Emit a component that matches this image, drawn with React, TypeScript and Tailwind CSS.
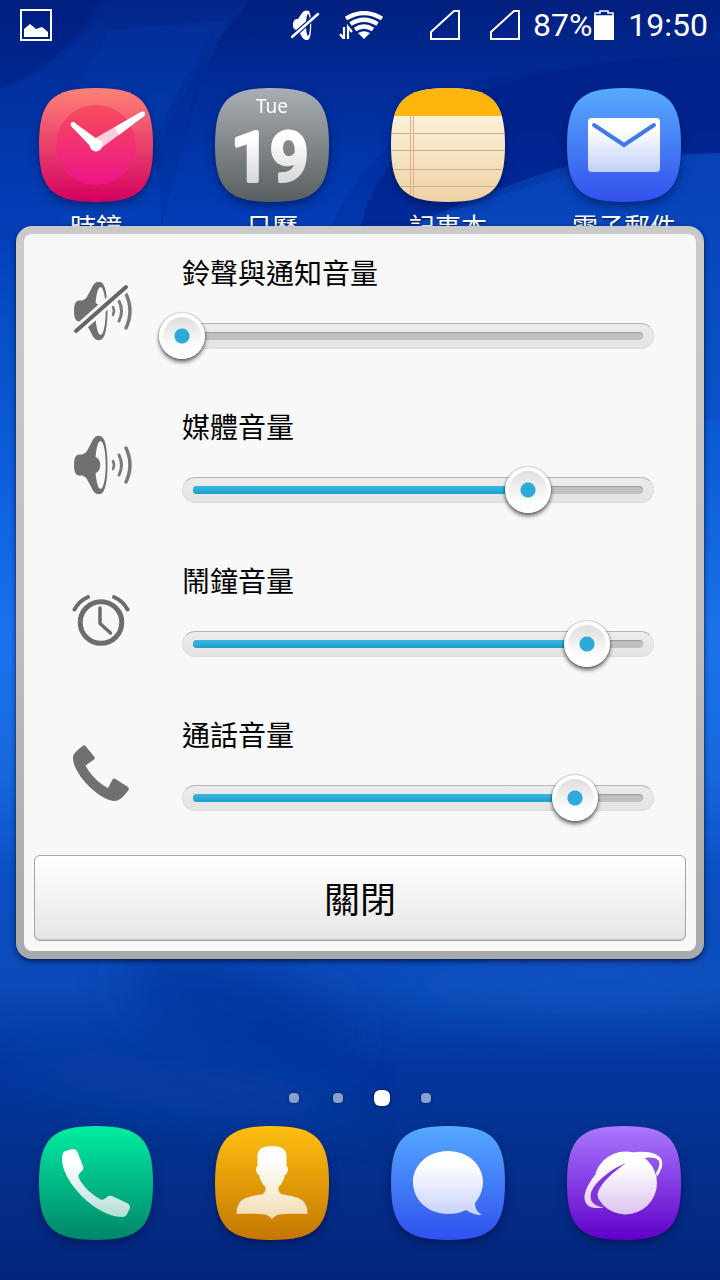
import { useState } from 'react'
import type { ReactNode } from 'react'

const SQUIRCLE = 'M57 0C101 0 114 13 114 57S101 114 57 114 0 101 0 57 13 0 57 0Z'

function Wallpaper() {
  return (
    <svg className="absolute inset-0 h-full w-full" viewBox="0 0 720 1280" preserveAspectRatio="none" aria-hidden="true">
      <defs>
        <linearGradient id="sky" x1="0" y1="0" x2="0" y2="1">
          <stop offset="0" stopColor="#011f7e" />
          <stop offset="0.06" stopColor="#012a96" />
          <stop offset="0.16" stopColor="#023bb3" />
          <stop offset="0.26" stopColor="#0650c8" />
          <stop offset="0.36" stopColor="#0c5cd8" />
          <stop offset="0.5" stopColor="#1b72ec" />
          <stop offset="0.6" stopColor="#1768e0" />
          <stop offset="0.68" stopColor="#0b50c4" />
          <stop offset="0.77" stopColor="#0b4ab8" />
          <stop offset="0.83" stopColor="#04369f" />
          <stop offset="0.89" stopColor="#033291" />
          <stop offset="1" stopColor="#04257c" />
        </linearGradient>
        <filter id="soft" x="-30%" y="-60%" width="160%" height="220%">
          <feGaussianBlur stdDeviation="24" />
        </filter>
      </defs>
      <rect width="720" height="1280" fill="url(#sky)" />
      <path d="M100 0H250Q200 60 175 110L120 230H0V90Q60 70 100 0Z" fill="#0848bd" opacity="0.2" />
      <path d="M230 20Q185 90 165 230H60Q50 120 110 30Z" fill="#0848bd" opacity="0.16" />
      <path d="M0 0H110Q70 60 0 88Z" fill="#001d84" opacity="0.25" />
      <path d="M215 30Q180 80 150 150Q165 200 160 230H330Q360 150 480 80Q590 56 720 56V154Q600 154 400 230H160Z" fill="#001c84" opacity="0.2" />
      <path d="M360 230Q375 150 480 90Q590 56 720 56V154Q600 154 400 230Z" fill="#001c84" opacity="0.5" />
      <path d="M400 230Q490 190 560 168Q620 153 720 153V420H400Z" fill="#0c4cc0" opacity="0.55" />
      <ellipse cx="240" cy="1010" rx="120" ry="44" transform="rotate(18 240 1010)" fill="#02309a" opacity="0.7" filter="url(#soft)" />
      <ellipse cx="600" cy="985" rx="200" ry="30" fill="#1157c4" opacity="0.6" filter="url(#soft)" />
      <ellipse cx="180" cy="1085" rx="180" ry="24" transform="rotate(8 180 1085)" fill="#0c47ab" opacity="0.6" filter="url(#soft)" />
    </svg>
  )
}

function StatusBar() {
  return (
    <header className="flex h-[50px] items-center pr-3 pl-5 text-[32px] leading-none text-white">
      <svg className="h-8 w-8" viewBox="0 0 32 32" aria-hidden="true">
        <rect x="1" y="1" width="30" height="30" fill="none" stroke="#fff" strokeWidth="2" />
        <path d="M4 28V20L10 15L16 20L22 18L28 23V28Z" fill="#fff" />
      </svg>
      <div className="ml-auto flex items-center">
        <svg className="h-[30px] w-[30px]" viewBox="0 0 30 30" aria-hidden="true">
          <path d="M2 15C2 10 4 9 7 9L11 3C13 0 16 0 18 1C21 6 21 25 18 29C16 31 13 30 11 27L7 20C4 20 2 19 2 15Z" fill="#fff" />
          <ellipse cx="17" cy="15" rx="2" ry="11" fill="#01228a" />
          <path d="M1 27L27 4" stroke="#01228a" strokeWidth="5" />
          <path d="M1 27L27 4" stroke="#fff" strokeWidth="2.500" strokeLinecap="round" />
        </svg>
        <svg className="ml-[18px] h-7 w-[46px]" viewBox="0 0 46 28" aria-hidden="true">
          <g fill="none" stroke="#fff" strokeWidth="4.200">
            <path d="M7 7.500Q25 -3.500 43 7.500" />
            <path d="M11.500 13Q25 4.500 38.500 13" />
            <path d="M16 18.500Q25 12.500 34 18.500" />
          </g>
          <path d="M19 22Q25 18.500 31 22L25 28Z" fill="#fff" />
          <path d="M5 16V28L1 23M9 28V16L13 21" fill="none" stroke="#fff" strokeWidth="2.200" />
        </svg>
        <svg className="ml-[45px] h-[30px] w-[30px]" viewBox="0 0 30 30" aria-hidden="true">
          <path d="M1 29V22L24 1H29V29Z" fill="none" stroke="#fff" strokeWidth="2" />
        </svg>
        <svg className="ml-[30px] h-[30px] w-[30px]" viewBox="0 0 30 30" aria-hidden="true">
          <path d="M1 29V22L24 1H29V29Z" fill="none" stroke="#fff" strokeWidth="2" />
        </svg>
        <span className="ml-[13px]">87%</span>
        <svg className="ml-[2px] h-[30px] w-5" viewBox="0 0 20 30" aria-hidden="true">
          <path d="M0 5H20V30H0Z" fill="#fff" />
          <path d="M1 6V3H6V1H14V3H19V6Z" fill="#01228a" stroke="#fff" strokeWidth="1.500" />
        </svg>
        <span className="ml-[14px]">19:50</span>
      </div>
    </header>
  )
}

function AppIcon({ id, from, to, children }: { id: string; from: string; to: string; children: ReactNode }) {
  return (
    <svg className="h-[114px] w-[114px] overflow-visible drop-shadow-[0_4px_4px_rgba(0,10,60,0.5)]" viewBox="0 0 114 114" aria-hidden="true">
      <defs>
        <linearGradient id={`${id}-bg`} x1="0" y1="0" x2="0" y2="1">
          <stop offset="0" stopColor={from} />
          <stop offset="1" stopColor={to} />
        </linearGradient>
        <clipPath id={`${id}-clip`}>
          <path d={SQUIRCLE} />
        </clipPath>
      </defs>
      <path d={SQUIRCLE} fill={`url(#${id}-bg)`} />
      <g clipPath={`url(#${id}-clip)`}>{children}</g>
    </svg>
  )
}

// Vertical white-to-tint fade used on the icon glyphs
function Fade({ id, y1, y2, to }: { id: string; y1: number; y2: number; to: string }) {
  return (
    <linearGradient id={id} gradientUnits="userSpaceOnUse" x1="0" y1={y1} x2="0" y2={y2}>
      <stop offset="0.2" stopColor="#fff" />
      <stop offset="1" stopColor={to} />
    </linearGradient>
  )
}

const apps = [
  {
    label: '時鐘',
    icon: (
      <AppIcon id="clock" from="#ff8278" to="#d4005f">
        <defs>
          <linearGradient id="dial" x1="0" y1="0" x2="0" y2="1">
            <stop offset="0" stopColor="#f84c5c" />
            <stop offset="0.5" stopColor="#f23072" />
            <stop offset="1" stopColor="#ee1488" />
          </linearGradient>
        </defs>
        <circle cx="57" cy="57" r="40" fill="url(#dial)" />
        <path d="M54 61L32 38Q31 35 33 34Q35 33 36 35L62 54Z" fill="#fff" />
        <path d="M61 61L105 28Q107 25 105 24Q104 23 102 24L53 52Z" fill="#ffcfe0" />
        <path d="M80 47L105 28Q107 25 105 24Q104 23 102 24L76 39Z" fill="#fff" />
        <circle cx="57" cy="57" r="6.500" fill="#fff" />
      </AppIcon>
    ),
  },
  {
    label: '日曆',
    icon: (
      <AppIcon id="calendar" from="#aaafb4" to="#595e60">
        <defs>
          <Fade id="date" y1={40} y2={98} to="#d2d4d5" />
        </defs>
        <text x="57" y="25" textAnchor="middle" fontFamily="'Noto Sans', sans-serif" fontSize="19" fill="#fff">Tue</text>
        <text x="55" y="93" textAnchor="middle" fontFamily="Roboto, sans-serif" fontWeight="500" fontSize="68" fill="url(#date)" stroke="url(#date)" strokeWidth="4" strokeLinejoin="round">19</text>
      </AppIcon>
    ),
  },
  {
    label: '記事本',
    icon: (
      <AppIcon id="notes" from="#fffbe8" to="#eed2a4">
        <rect width="114" height="28" fill="#ffb60c" />
        <path d="M0 45.500H114M0 62.500H114M0 81.500H114M0 98.500H114" stroke="#c3b192" />
        <path d="M19.500 28V114M22.500 28V114" stroke="#e8a98c" />
      </AppIcon>
    ),
  },
  {
    label: '電子郵件',
    icon: (
      <AppIcon id="mail" from="#57abff" to="#3350ec">
        <defs>
          <Fade id="envelope" y1={30} y2={84} to="#c3cff8" />
        </defs>
        <rect x="21" y="30" width="72" height="54" rx="4" fill="url(#envelope)" />
        <path d="M27 37L57 57L87 37" fill="none" stroke="#4379e8" strokeWidth="4" strokeLinecap="round" />
      </AppIcon>
    ),
  },
]

const dock = [
  {
    label: '電話',
    icon: (
      <AppIcon id="phone" from="#00eda2" to="#00856a">
        <defs>
          <Fade id="handset" y1={23} y2={91} to="#b4ded5" />
        </defs>
        <path d="M26 25L34 23Q37 22.500 38.500 26L44 40Q45 43 42.500 45.500Q39 48 39.500 51C43 60 54 70 63 74Q66 73 68 71Q71 69 74 70.500L88 77Q91.500 79 91 82L88 88Q87 91 83 91C57 91 22 55 23 32Q23 27 26 25Z" fill="url(#handset)" />
      </AppIcon>
    ),
  },
  {
    label: '聯絡人',
    icon: (
      <AppIcon id="contacts" from="#ffc010" to="#c47600">
        <defs>
          <Fade id="person" y1={20} y2={93} to="#f2ddb4" />
        </defs>
        <path d="M57 20C48 20 43 23 42.500 29V40C40 41 41 48 44 49C45 54 47 58 50.500 61C51 64 50 66 48 68C38 70 29 71 25 76C22 80 21.500 84 21.500 88C32 87.500 44 87.500 50 88.500C53 89 55 91 57 93C59 91 61 89 64 88.500C70 87.500 82 87.500 92.500 88C92.500 84 92 80 89 76C85 71 76 70 66 68C64 66 63 64 63.500 61C67 58 69 54 70 49C73 48 74 41 71.500 40V29C71 23 66 20 57 20Z" fill="url(#person)" />
      </AppIcon>
    ),
  },
  {
    label: '訊息',
    icon: (
      <AppIcon id="messages" from="#55aaff" to="#3050ee">
        <defs>
          <Fade id="bubble" y1={25} y2={89} to="#c8d2fa" />
        </defs>
        <path d="M57 25C77 25 92 39 92 56C92 64 89 71 84 77C84 82 86 86 91 89C85 89 79 87 75 84C69 87 63 88 57 88C37 88 22 74 22 56C22 39 37 25 57 25Z" fill="url(#bubble)" />
      </AppIcon>
    ),
  },
  {
    label: '瀏覽器',
    icon: (
      <AppIcon id="browser" from="#aa78ff" to="#6000c8">
        <defs>
          <Fade id="planet" y1={26} y2={88} to="#dcc4f0" />
        </defs>
        <circle cx="58.500" cy="57" r="31.500" fill="url(#planet)" />
        <path d="M64 27C78 24 93 27 95 35C96 41 93 46 90 51L89 47C92 42 94 36 91 34C87 31 81 31 76 33Z" fill="url(#planet)" />
        <path d="M28 49C20 59 16 69 18 75C20 82 28 83 37 81.500C28 80 23 76 24 69C26 60 38 48 48 42Z" fill="url(#planet)" />
        <path d="M59 37C42 44 27 57 24 67C22 75 27 80 37 81L35 78C31 74 30 70 31 66C35 56 46 46 59 37Z" fill="#8234dc" />
      </AppIcon>
    ),
  },
]

function Speaker({ muted = false }: { muted?: boolean }) {
  return (
    <svg className="h-[60px] w-[60px]" viewBox="0 0 60 60" aria-hidden="true">
      <path d="M2 30C2 22 4 19.500 8 19.500C12 19.500 14 18 16 14L21 4.500C23 1 28 -1 31 3C37 10 37 50 31 57C28 61 23 59 21 55.500L16 46C14 42 12 40.500 8 40.500C4 40.500 2 38 2 30Z" fill="#707070" />
      <ellipse cx="28.500" cy="30" rx="5.200" ry="24" fill="#f8f8f8" />
      <path d="M23 22C30 23 30 37 23 38Z" fill="#707070" />
      <g fill="none" stroke="#7a7a7a" strokeLinecap="round">
        <path d="M41 26Q43 30 41 34" strokeWidth="2.500" />
        <path d="M47 20Q52 30 47 40" strokeWidth="3" />
        <path d="M54 13Q62 30 54 47" strokeWidth="3.500" />
      </g>
      {muted && (
        <>
          <path d="M3 51L55 5" stroke="#f8f8f8" strokeWidth="10" />
          <path d="M4 50L54 6" stroke="#666" strokeWidth="4" strokeLinecap="round" />
        </>
      )}
    </svg>
  )
}

function AlarmClock() {
  return (
    <svg className="h-[60px] w-[60px]" viewBox="0 0 60 60" fill="none" stroke="#6c6c6c" strokeLinecap="round" strokeLinejoin="round" aria-hidden="true">
      <circle cx="29" cy="33.500" r="20.800" strokeWidth="5" />
      <path d="M28 19V34.500L38.500 44" strokeWidth="3.500" />
      <path d="M2.500 20.500Q7 12 16 8M42 8Q51 12 55.500 20.500" strokeWidth="4" />
    </svg>
  )
}

function Handset() {
  return (
    <svg className="h-[60px] w-[60px]" viewBox="0 0 60 60" aria-hidden="true">
      <path d="M10.500 3Q12 1.500 13.500 3L22.500 14Q23.500 15.500 22 16.500L13.500 22.500C18 31 26 40 36 45L40.500 36.500Q41.500 35 43.500 36L56 44Q57.500 45.500 56.500 47C52 53 48 58 42 58C25 56 1 30 1 15C1 10 6 7 10.500 3Z" fill="#707070" />
    </svg>
  )
}

const volumes = [
  { id: 'ring', label: '鈴聲與通知音量', icon: <Speaker muted />, initial: 0, max: 7 },
  { id: 'media', label: '媒體音量', icon: <Speaker />, initial: 11, max: 15 },
  { id: 'alarm', label: '鬧鐘音量', icon: <AlarmClock />, initial: 6, max: 7 },
  { id: 'call', label: '通話音量', icon: <Handset />, initial: 5, max: 6 },
]

function VolumeRow({ id, label, icon, initial, max }: (typeof volumes)[number]) {
  const [value, setValue] = useState(initial)

  return (
    <div className="flex items-center pr-[19px] pl-12">
      <div className="shrink-0">{icon}</div>
      <div className="ml-[27px] flex-1 pt-[21px] pb-7">
        <label htmlFor={id} className="ml-[23px] block text-[28px] leading-10">
          {label}
        </label>
        <div className="mt-[17px] grid items-center">
          {/* Track sits under the transparent range input */}
          <div className="col-start-1 row-start-1 mx-[23px] flex h-[26px] items-center rounded-full border border-[#dcdcdc] border-t-[#b4b4b4] bg-linear-to-b from-[#ececec] to-[#e4e4e4] px-[10px]">
            <div className="h-2 w-full overflow-hidden rounded-full bg-[#c0c0c0] shadow-[inset_0_1px_1px_rgba(0,0,0,0.2)]">
              <div className="h-full bg-linear-to-b from-[#3ab8e2] to-[#1c9fcf]" style={{ width: `${(value / max) * 100}%` }} />
            </div>
          </div>
          <input
            id={id}
            type="range"
            min={0}
            max={max}
            value={value}
            onChange={(e) => setValue(Number(e.target.value))}
            className="z-10 col-start-1 row-start-1 h-12 w-full cursor-pointer appearance-none bg-transparent [&::-webkit-slider-thumb]:h-[46px] [&::-webkit-slider-thumb]:w-[46px] [&::-webkit-slider-thumb]:appearance-none [&::-webkit-slider-thumb]:rounded-full [&::-webkit-slider-thumb]:bg-[radial-gradient(circle,#2da9dc_0,#2da9dc_7px,transparent_8px),linear-gradient(#dedede_8%,#fdfdfd_75%)] [&::-webkit-slider-thumb]:shadow-[inset_0_0_1px_4px_#fff,0_0_2px_rgba(0,0,0,0.4),0_3px_4px_rgba(0,0,0,0.6)]"
          />
        </div>
      </div>
    </div>
  )
}

export default function App() {
  return (
    <div className="relative flex min-h-screen flex-col overflow-hidden bg-[#0438a6] font-[Roboto,'Noto_Sans_CJK_TC',sans-serif]">
      <Wallpaper />

      <div className="relative flex flex-1 flex-col">
        <StatusBar />

        <nav className="mt-[38px] grid grid-cols-4 px-2">
          {apps.map((app) => (
            <a key={app.label} href="#" className="flex flex-col items-center gap-2 text-white">
              {app.icon}
              <span className="text-[26px] leading-9 [text-shadow:0_1px_2px_rgba(0,0,0,0.6)]">{app.label}</span>
            </a>
          ))}
        </nav>

        <div className="mt-auto flex h-4 items-center justify-center">
          {[0, 1, 2, 3].map((page) => (
            <span key={page} className="flex w-11 justify-center">
              <span
                className={
                  page === 2
                    ? 'h-4 w-4 rounded-[6px] bg-white shadow-[0_0_3px_rgba(0,0,0,0.6)]'
                    : 'h-[10px] w-[10px] rounded-[4px] bg-[#8c9fd2] shadow-[0_0_3px_rgba(0,0,0,0.5)]'
                }
              />
            </span>
          ))}
        </div>

        <nav className="mt-5 grid grid-cols-4 px-2 pb-10">
          {dock.map((app) => (
            <a key={app.label} href="#" aria-label={app.label} className="flex justify-center">
              {app.icon}
            </a>
          ))}
        </nav>
      </div>

      <div className="absolute inset-x-0 top-[226px] px-4">
        <div role="dialog" className="rounded-2xl bg-linear-to-b from-[#cacaca] via-[#c0c0c0] to-[#a9a9a9] p-2 text-black shadow-[0_2px_5px_rgba(0,10,50,0.8)]">
          <div className="rounded-lg bg-[#f8f8f8]">
            {volumes.map((volume) => (
              <VolumeRow key={volume.id} {...volume} />
            ))}
            <div className="px-[10px] pt-[5px] pb-[10px]">
              <button
                type="button"
                className="h-[86px] w-full rounded-md border border-[#a6a6a6] bg-linear-to-b from-white to-[#e6e6e6] pt-[6px] text-4xl shadow-[inset_0_-1px_1px_rgba(0,0,0,0.15)]"
              >
                關閉
              </button>
            </div>
          </div>
        </div>
      </div>
    </div>
  )
}
